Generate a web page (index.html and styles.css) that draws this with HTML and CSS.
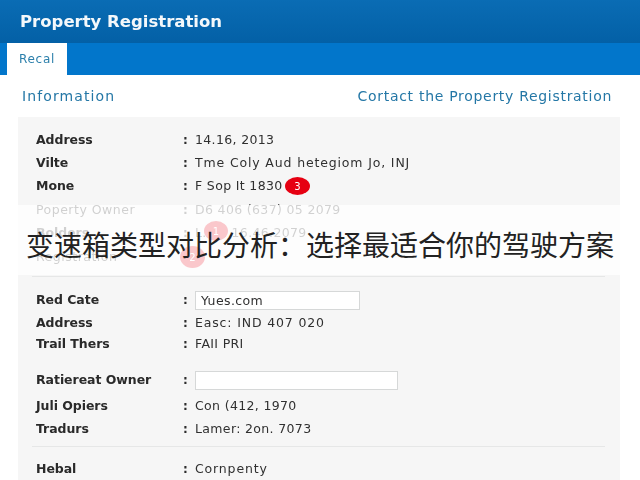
FILE: index.html
```html
<!DOCTYPE html>
<html lang="en">
<head>
<meta charset="utf-8">
<title>Property Registration</title>
<link rel="stylesheet" href="styles.css">
</head>
<body>
<div class="page">
  <header class="top">
    <h1 class="title">Property Registration</h1>
  </header>
  <nav class="tabs"><a class="tab">Recal</a></nav>
  <div class="heads">
    <h2 class="head head-wide">Information</h2>
    <h2 class="head">Cortact the Property Registration</h2>
  </div>
  <main class="panel">
    <section class="group">
      <div class="row"><span class="label">Address</span><span class="colon">:</span><span class="value">14.16, 2013</span></div>
      <div class="row"><span class="label">Vilte</span><span class="colon">:</span><span class="value value-wide">Tme Coly Aud hetegiom Jo, INJ</span></div>
      <div class="row"><span class="label">Mone</span><span class="colon">:</span><span class="value">F Sop It 1830</span><span class="badge badge-three">3</span></div>
      <div class="row row-step"><span class="label label-light">Poperty Owner</span><span class="colon">:</span><span class="value">D6 406 (637) 05 2079</span></div>
      <div class="row"><span class="label">Bolders</span><span class="colon">:</span><span class="value">L. on 16.46.2079</span><span class="badge badge-one">1</span></div>
      <div class="row row-step"><span class="label label-light">Registration</span><span class="badge badge-two">2</span></div>
    </section>
    <section class="group group-mid">
      <div class="row"><span class="label">Red Cate</span><span class="colon">:</span><span class="field field-short">Yues.com</span></div>
      <div class="row"><span class="label">Address</span><span class="colon">:</span><span class="value value-wide">Easc: IND 407 020</span></div>
      <div class="row row-tight"><span class="label">Trail Thers</span><span class="colon">:</span><span class="value">FAII PRI</span></div>
      <div class="row row-far"><span class="label">Ratiereat Owner</span><span class="colon">:</span><span class="field field-long"></span></div>
      <div class="row row-step"><span class="label">Juli Opiers</span><span class="colon">:</span><span class="value">Con (412, 1970</span></div>
      <div class="row"><span class="label">Tradurs</span><span class="colon">:</span><span class="value">Lamer: 2on. 7073</span></div>
    </section>
    <section class="group group-last">
      <div class="row"><span class="label">Hebal</span><span class="colon">:</span><span class="value value-wide">Cornpenty</span></div>
    </section>
  </main>
  <div class="band">变速箱类型对比分析：选择最适合你的驾驶方案</div>
</div>
</body>
</html>
```
FILE: styles.css
```css
* { box-sizing: border-box; }
html, body { margin: 0; padding: 0; }
body { width: 640px; height: 480px; overflow: hidden; background: #fff; font-family: "DejaVu Sans", sans-serif; }
.page { position: relative; width: 640px; height: 480px; overflow: hidden; }
.top, .tabs, .heads, .panel { filter: blur(.4px); }
.top { height: 43px; padding: 0 0 1px 20px; display: flex; align-items: center; background: linear-gradient(#0a6cb4, #0360a6); }
.title { margin: 0; font-size: 16.5px; font-weight: 700; color: #f4f8fb; }
.tabs { height: 32px; padding-left: 7px; display: flex; background: #0276cb; }
.tab { width: 60px; display: flex; align-items: center; justify-content: center; background: #fff; color: #2b7fab; font-size: 12px; letter-spacing: .7px; }
.heads { height: 42px; padding: 0 28px 0 22px; display: flex; justify-content: space-between; align-items: center; }
.head { margin: 0; font-size: 14px; font-weight: 400; color: #2477a6; letter-spacing: .7px; }
.head-wide { letter-spacing: 1.1px; }
.panel { margin: 0 20px 0 18px; height: 380px; padding: 11px 15px 0 14px; background: #f6f6f6; }
.group { padding-bottom: 8px; border-bottom: 1px solid #e6e7e7; margin-bottom: 11px; }
.group-mid { padding-bottom: 6px; margin-bottom: 10px; }
.group-last { border-bottom: 0; }
.row { position: relative; height: 23px; display: flex; align-items: center; font-size: 12.5px; color: #2c2c2c; padding-left: 4px; }
.row-step { margin-top: 1px; }
.row-tight { height: 19px; }
.row-far { margin-top: 13px; height: 27px; }
.label { width: 147px; font-weight: 700; color: #2a2a2a; font-size: 12.5px; flex: none; letter-spacing: -.05px; }
.label-light { font-weight: 400; letter-spacing: .5px; }
.colon { width: 12px; flex: none; font-size: 12px; font-weight: 700; }
.value { color: #303030; letter-spacing: .35px; white-space: nowrap; }
.value-wide { letter-spacing: .85px; }
.field { margin-top: 1px; height: 19px; background: #fff; border: 1px solid #d6d8d8; padding-left: 5px; line-height: 17px; color: #303030; letter-spacing: .4px; }
.field-short { width: 165px; }
.field-long { width: 203px; }
.badge { position: absolute; display: flex; align-items: center; justify-content: center; background: #e60012; color: #fff; border-radius: 50%; font-size: 10px; }
.badge-three { left: 253px; top: 3px; width: 25px; height: 18px; }
.badge-one { left: 172px; top: 0; width: 24px; height: 20px; }
.badge-two { left: 148px; top: 1px; width: 25px; height: 22px; }
.band { position: absolute; left: 0; top: 205px; width: 640px; height: 70px; display: flex; align-items: center; justify-content: center; padding-top: 8px; background: rgba(255,255,255,.78); color: #222; font-size: 28px; font-family: "Noto Sans CJK SC", sans-serif; }
```
